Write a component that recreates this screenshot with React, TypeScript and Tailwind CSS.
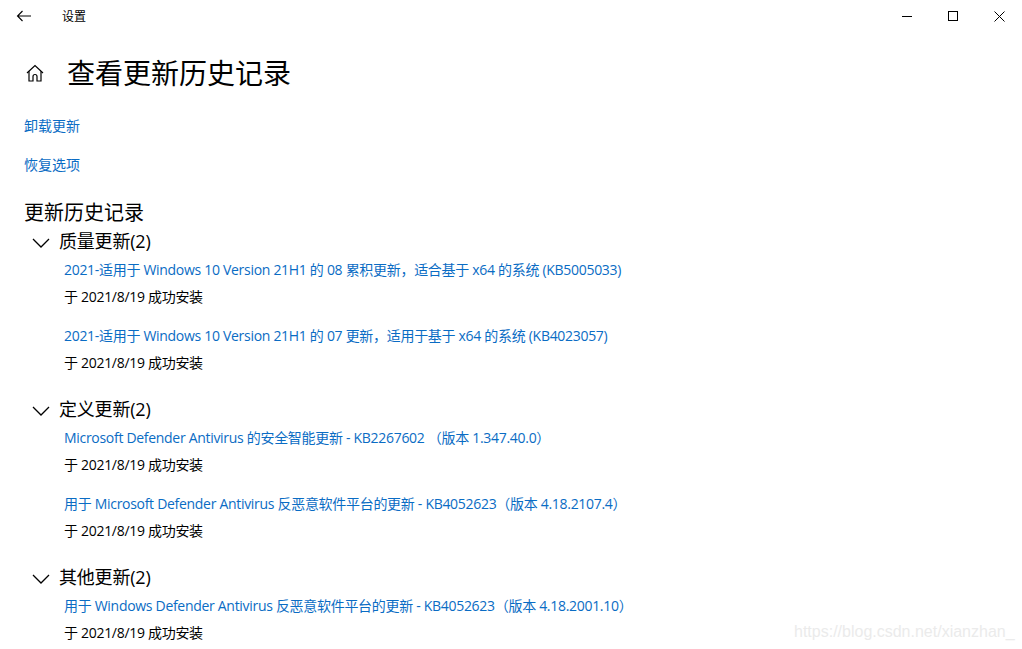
import React from "react";

const FONT = { fontFamily: '"Open Sans", "Noto Sans CJK SC", sans-serif' };

type Entry = { title: string; date: string };
type Group = { name: string; entries: Entry[] };

const groups: Group[] = [
  {
    name: "质量更新(2)",
    entries: [
      {
        title: "2021-适用于 Windows 10 Version 21H1 的 08 累积更新，适合基于 x64 的系统 (KB5005033)",
        date: "于 2021/8/19 成功安装",
      },
      {
        title: "2021-适用于 Windows 10 Version 21H1 的 07 更新，适用于基于 x64 的系统 (KB4023057)",
        date: "于 2021/8/19 成功安装",
      },
    ],
  },
  {
    name: "定义更新(2)",
    entries: [
      {
        title: "Microsoft Defender Antivirus 的安全智能更新 - KB2267602 （版本 1.347.40.0）",
        date: "于 2021/8/19 成功安装",
      },
      {
        title: "用于 Microsoft Defender Antivirus 反恶意软件平台的更新 - KB4052623（版本 4.18.2107.4）",
        date: "于 2021/8/19 成功安装",
      },
    ],
  },
  {
    name: "其他更新(2)",
    entries: [
      {
        title: "用于 Windows Defender Antivirus 反恶意软件平台的更新 - KB4052623（版本 4.18.2001.10）",
        date: "于 2021/8/19 成功安装",
      },
    ],
  },
];

function HomeIcon() {
  return (
    <svg width="18" height="18" viewBox="0 0 18 18" fill="none" stroke="#000" strokeWidth="1.2">
      <path d="M1 9 L9 1.5 L17 9" />
      <path d="M3 7.2 V17 H7 V12.5 A2 2 0 0 1 11 12.5 V17 H15 V7.2" />
    </svg>
  );
}

function Chevron() {
  return (
    <svg width="18" height="10" viewBox="0 0 18 10" fill="none" stroke="#000" strokeWidth="1.3">
      <path d="M1 1 L9 9 L17 1" />
    </svg>
  );
}

export default function App() {
  return (
    <div className="relative w-[1022px] h-[649px] bg-white overflow-hidden text-black" style={FONT}>
      {/* Title bar */}
      <div className="h-8 flex items-center">
        <div className="w-12 flex justify-center">
          <svg width="16" height="12" viewBox="0 0 16 12" fill="none" stroke="#000" strokeWidth="1.1">
            <path d="M15 6 H1.5 M6.5 1 L1.5 6 L6.5 11" />
          </svg>
        </div>
        <span className="ml-[14px] mt-[1px] text-[12px]">设置</span>
        <div className="ml-auto flex h-8">
          <div className="w-[46px] flex items-center justify-center">
            <div className="w-[10px] h-px bg-black" />
          </div>
          <div className="w-[46px] flex items-center justify-center">
            <div className="w-[10px] h-[10px] border border-black" />
          </div>
          <div className="w-[46px] flex items-center justify-center">
            <svg width="11" height="11" viewBox="0 0 11 11" stroke="#000" strokeWidth="1">
              <path d="M0.5 0.5 L10.5 10.5 M10.5 0.5 L0.5 10.5" />
            </svg>
          </div>
        </div>
      </div>

      <div className="px-6">
        {/* Heading */}
        <div className="mt-[18px] h-[46px] flex items-center">
          <div className="w-[20px] flex justify-center ml-[1px]">
            <HomeIcon />
          </div>
          <h1 className="ml-[22px] text-[28px] leading-[46px]">查看更新历史记录</h1>
        </div>

        <div className="mt-[20px] text-[14px] leading-[20px] text-[#0a6cc4]">卸载更新</div>
        <div className="mt-[19px] text-[14px] leading-[20px] text-[#0a6cc4]">恢复选项</div>

        <h2 className="mt-[24px] text-[20px] leading-[28px]">更新历史记录</h2>

        <div className="mt-[1px] flex flex-col gap-[23px]">
          {groups.map((g) => (
            <div key={g.name}>
              <div className="h-[26px] flex items-center">
                <div className="ml-[8px] w-[18px] flex mt-[4px]">
                  <Chevron />
                </div>
                <span className="ml-[9px] text-[18px] leading-[26px] tracking-[-0.2px]">{g.name}</span>
              </div>
              <div className="mt-[6px] pl-10 flex flex-col gap-[19px]">
                {g.entries.map((e, i) => (
                  <div key={i}>
                    <div className="text-[14px] leading-[20px] tracking-[-0.3px] text-[#0a6cc4]">{e.title}</div>
                    <div className="mt-[7px] text-[14px] leading-[20px] tracking-[-0.3px]">{e.date}</div>
                  </div>
                ))}
              </div>
            </div>
          ))}
        </div>
      </div>

      {/* Watermark */}
      <div
        className="absolute left-[794px] top-[622px] text-[16px] leading-[20px] text-[#ebebeb]"
        style={{ fontFamily: '"Liberation Sans", Arial, sans-serif' }}
      >
        https://blog.csdn.net/xianzhan_
      </div>
    </div>
  );
}
